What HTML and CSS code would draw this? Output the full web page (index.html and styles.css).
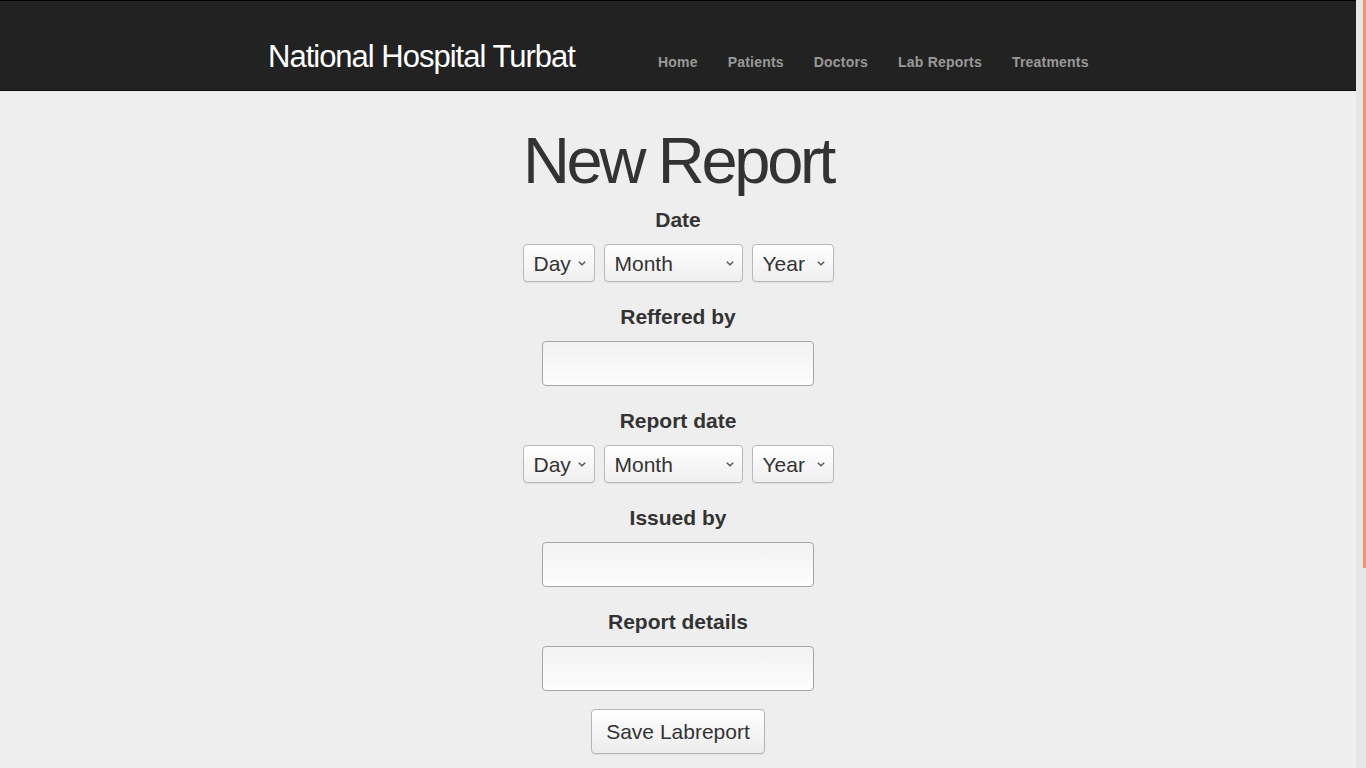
FILE: index.html
```html
<!DOCTYPE html>
<html lang="en">
<head>
<meta charset="utf-8">
<title>New Report - National Hospital Turbat</title>
<link rel="stylesheet" href="styles.css">
</head>
<body>
<div class="viewport">
  <div class="page">
    <header class="navbar">
      <div class="navbar-inner">
        <a class="brand" href="#">National Hospital Turbat</a>
        <ul class="nav">
          <li><a href="#">Home</a></li>
          <li><a href="#">Patients</a></li>
          <li><a href="#">Doctors</a></li>
          <li><a href="#">Lab Reports</a></li>
          <li><a href="#">Treatments</a></li>
        </ul>
      </div>
    </header>
    <main class="main">
      <h1 class="title">New Report</h1>
      <form class="form">
        <div class="field">
          <label class="label">Date</label>
          <div class="date-row">
            <div class="select-wrap w-day"><select class="select"><option>Day</option></select><svg class="chev" viewBox="0 0 8 5" width="8" height="5"><path d="M0.8 0.8 L4 3.8 L7.2 0.8" fill="none" stroke="#555" stroke-width="1.4"/></svg></div>
            <div class="select-wrap w-month"><select class="select"><option>Month</option></select><svg class="chev" viewBox="0 0 8 5" width="8" height="5"><path d="M0.8 0.8 L4 3.8 L7.2 0.8" fill="none" stroke="#555" stroke-width="1.4"/></svg></div>
            <div class="select-wrap w-year"><select class="select"><option>Year</option></select><svg class="chev" viewBox="0 0 8 5" width="8" height="5"><path d="M0.8 0.8 L4 3.8 L7.2 0.8" fill="none" stroke="#555" stroke-width="1.4"/></svg></div>
          </div>
        </div>
        <div class="field">
          <label class="label">Reffered by</label>
          <input class="input" type="text">
        </div>
        <div class="field">
          <label class="label">Report date</label>
          <div class="date-row">
            <div class="select-wrap w-day"><select class="select"><option>Day</option></select><svg class="chev" viewBox="0 0 8 5" width="8" height="5"><path d="M0.8 0.8 L4 3.8 L7.2 0.8" fill="none" stroke="#555" stroke-width="1.4"/></svg></div>
            <div class="select-wrap w-month"><select class="select"><option>Month</option></select><svg class="chev" viewBox="0 0 8 5" width="8" height="5"><path d="M0.8 0.8 L4 3.8 L7.2 0.8" fill="none" stroke="#555" stroke-width="1.4"/></svg></div>
            <div class="select-wrap w-year"><select class="select"><option>Year</option></select><svg class="chev" viewBox="0 0 8 5" width="8" height="5"><path d="M0.8 0.8 L4 3.8 L7.2 0.8" fill="none" stroke="#555" stroke-width="1.4"/></svg></div>
          </div>
        </div>
        <div class="field">
          <label class="label">Issued by</label>
          <input class="input" type="text">
        </div>
        <div class="field">
          <label class="label">Report details</label>
          <input class="input" type="text">
        </div>
        <button class="btn" type="button">Save Labreport</button>
      </form>
    </main>
  </div>
  <div class="scrollbar"><div class="thumb"></div></div>
</div>
</body>
</html>
```

FILE: styles.css
```css
html, body {
  margin: 0;
  padding: 0;
  height: 100%;
  overflow: hidden;
}

body {
  font-family: "Liberation Sans", Arial, Helvetica, sans-serif;
  color: #333;
  background: #eeeeee;
}

.viewport {
  display: flex;
  height: 768px;
}

.page {
  flex: 1;
  min-width: 0;
  overflow: hidden;
  background: #eeeeee;
}

.scrollbar {
  width: 10px;
  flex: 0 0 10px;
  background: #e6e6e6;
  display: flex;
  justify-content: flex-end;
}

.thumb {
  width: 3px;
  height: 568px;
  background: #f4936b;
}

/* Navbar */
.navbar {
  background: #222222;
  border-top: 1px solid #000;
  border-bottom: 1px solid #0c0c0c;
}

.navbar-inner {
  display: flex;
  align-items: flex-start;
  height: 89px;
  padding-left: 268px;
}

.brand {
  flex: 0 0 375px;
  margin-top: 38px;
  font-size: 31px;
  line-height: 36px;
  letter-spacing: -1px;
  color: #ffffff;
  text-decoration: none;
  white-space: nowrap;
}

.nav {
  display: flex;
  list-style: none;
  margin: 51px 0 0;
  padding: 0;
}

.nav a {
  display: block;
  padding: 0 15px;
  font-size: 14px;
  line-height: 20px;
  font-weight: bold;
  letter-spacing: 0.2px;
  color: #999999;
  text-decoration: none;
}

/* Main */
.main {
  padding-top: 34px;
  display: flex;
  flex-direction: column;
  align-items: center;
}

.title {
  margin: 0 0 11px;
  font-size: 65px;
  line-height: 72px;
  font-weight: normal;
  letter-spacing: -3.3px;
  color: #333;
}

.form {
  display: flex;
  flex-direction: column;
  align-items: center;
}

.field {
  display: flex;
  flex-direction: column;
  align-items: center;
  margin-bottom: 23px;
}

.field:last-of-type {
  margin-bottom: 18px;
}

.label {
  display: block;
  font-size: 21px;
  line-height: 24px;
  font-weight: bold;
  color: #333;
  margin-bottom: 12px;
}

.date-row {
  display: flex;
  gap: 9px;
}

.select-wrap {
  position: relative;
  height: 38px;
}

.w-day { width: 72px; }
.w-month { width: 139px; }
.w-year { width: 82px; }

.select {
  -webkit-appearance: none;
  appearance: none;
  width: 100%;
  height: 38px;
  box-sizing: border-box;
  margin: 0;
  padding: 0 20px 0 10px;
  font-family: "Liberation Sans", Arial, Helvetica, sans-serif;
  font-size: 21px;
  color: #333;
  border: 1px solid #b9b9b9;
  border-radius: 4px;
  background: linear-gradient(#ffffff, #efefef);
  box-shadow: 0 1px 1px rgba(0, 0, 0, 0.06);
}

.chev {
  position: absolute;
  right: 9px;
  top: 17px;
  pointer-events: none;
}

.input {
  display: block;
  width: 272px;
  height: 45px;
  box-sizing: border-box;
  margin: 0;
  padding: 0 10px;
  font-family: "Liberation Sans", Arial, Helvetica, sans-serif;
  font-size: 21px;
  color: #333;
  border: 1px solid #a6a6a6;
  border-radius: 4px;
  background: linear-gradient(#f2f2f2, #fdfdfd);
}

.btn {
  width: 174px;
  height: 45px;
  box-sizing: border-box;
  margin: 0;
  padding: 0;
  font-family: "Liberation Sans", Arial, Helvetica, sans-serif;
  font-size: 21px;
  color: #333;
  border: 1px solid #b5b5b5;
  border-radius: 4px;
  background: linear-gradient(#ffffff, #ececec);
  box-shadow: 0 1px 1px rgba(0, 0, 0, 0.06);
}
```
